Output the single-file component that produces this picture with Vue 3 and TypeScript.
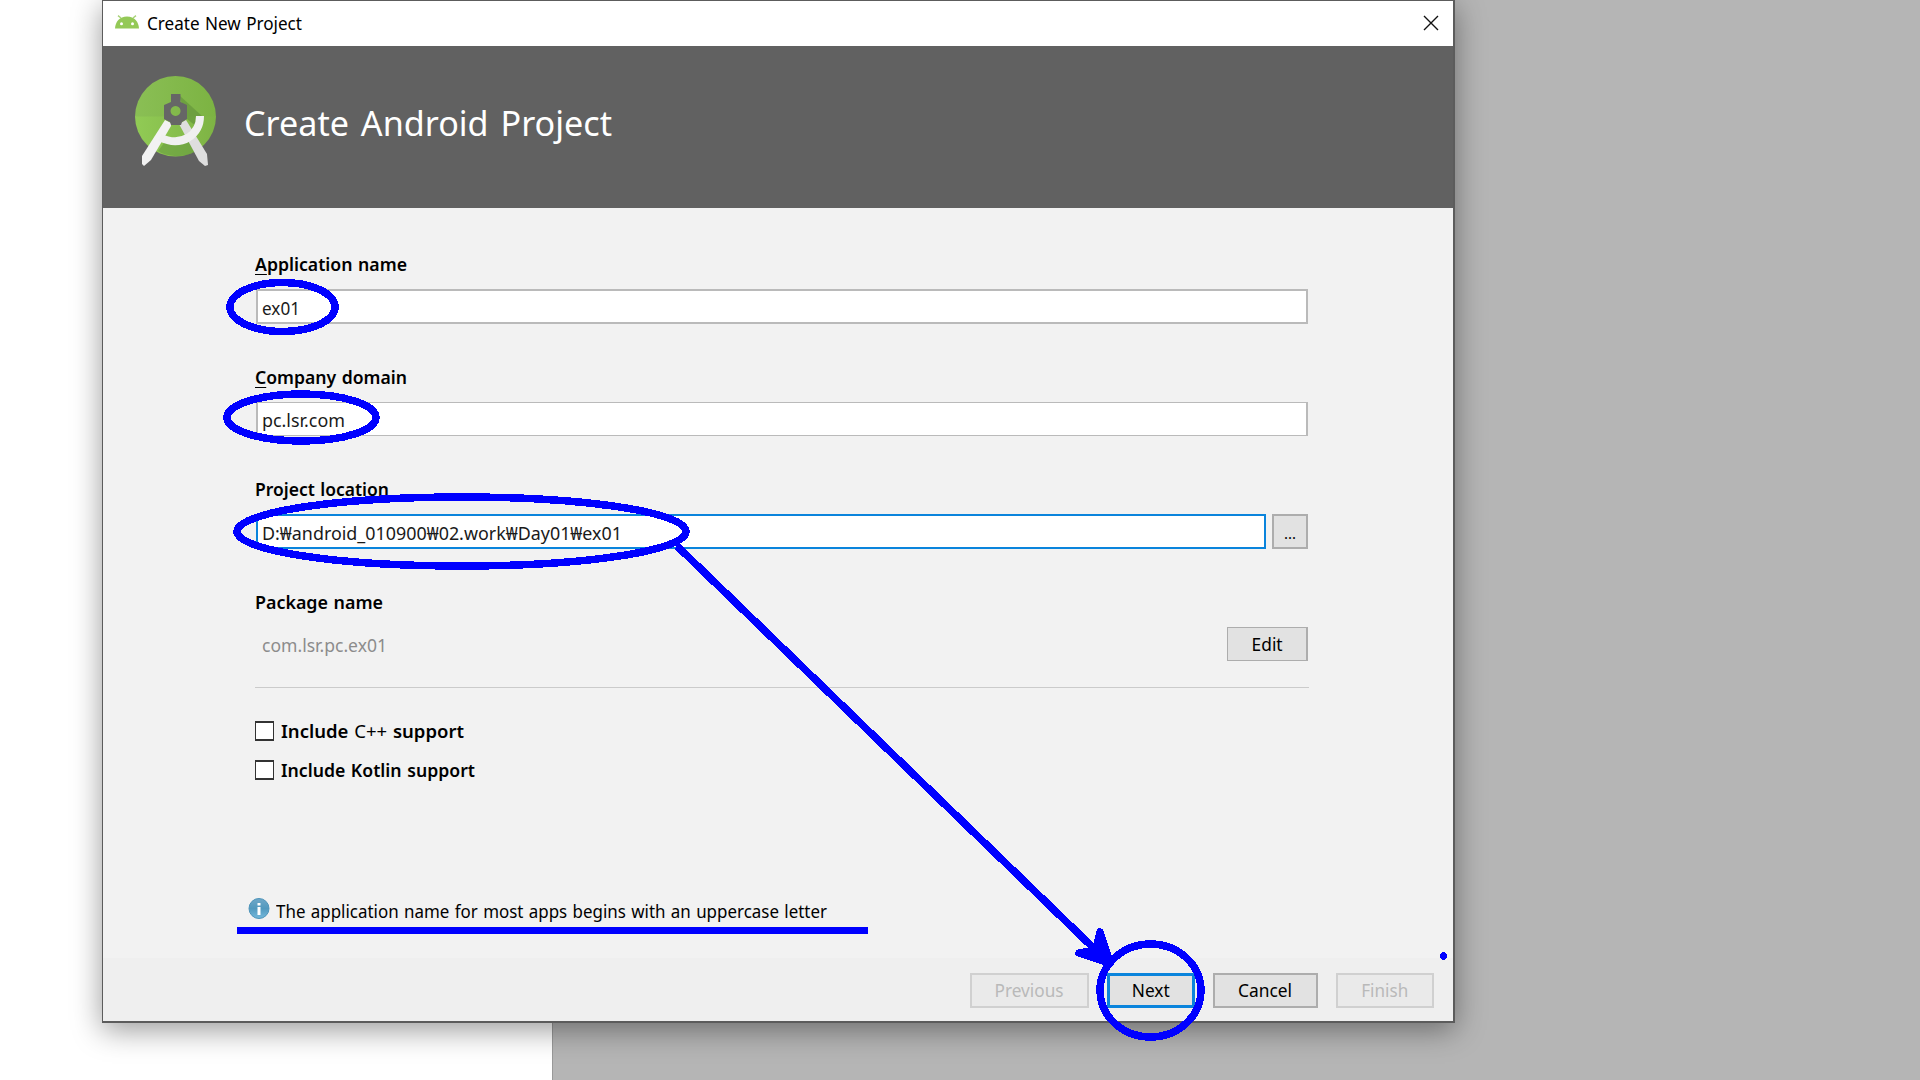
<script setup lang="ts">
interface Field {
  label: string
  mnemonic: string
  value: string
  labelWidth: number
  valueWidth: number
  kind: string
}

interface Action {
  text: string
  width: number
  textWidth: number
  gap: number
  state: string
}

const fields: Field[] = [
  { mnemonic: 'A', label: 'pplication name', value: 'ex01', labelWidth: 152, valueWidth: 38, kind: 'thick' },
  { mnemonic: 'C', label: 'ompany domain', value: 'pc.lsr.com', labelWidth: 152, valueWidth: 83, kind: 'thin' },
  { mnemonic: '', label: 'Project location', value: 'D:₩android_010900₩02.work₩Day01₩ex01', labelWidth: 134, valueWidth: 360, kind: 'focused' },
]

const options = [
  { lead: 'Include ', plain: 'C++', tail: ' support', width: 183 },
  { lead: 'Include Kotlin support', plain: '', tail: '', width: 194 },
]

const actions: Action[] = [
  { text: 'Previous', width: 119, textWidth: 69, gap: 18, state: 'disabled' },
  { text: 'Next', width: 88, textWidth: 38, gap: 18, state: 'primary' },
  { text: 'Cancel', width: 105, textWidth: 54, gap: 18, state: 'normal' },
  { text: 'Finish', width: 98, textWidth: 47, gap: 0, state: 'disabled' },
]

// Condenses a text run horizontally to a given width.
const vFit = {
  mounted(el: HTMLElement, binding: { value: number }) {
    const natural = el.getBoundingClientRect().width
    el.style.transform = `scaleX(${binding.value / natural})`
  },
}
</script>

<template>
  <div class="desktop">
    <div class="page"></div>
    <section class="window">
      <div class="titlebar">
        <svg class="droid" width="24" height="14" viewBox="0 0 24 14">
          <path d="M6 3L3 .6M18 3L21 .6" fill="none" stroke="#a9d279" stroke-width="1.4" />
          <path d="M0 13.500C.3 7 4.500 1.500 12 1.500s11.700 5.500 12 12z" fill="#94c957" />
          <circle cx="6.500" cy="8.700" r="1.500" fill="#fff" /><circle cx="17.500" cy="8.700" r="1.500" fill="#fff" />
        </svg>
        <span v-fit="155" class="fit">Create New Project</span>
        <svg class="close" width="16" height="16" viewBox="0 0 16 16"><path d="M1 1l14 14M15 1L1 15" stroke="#111" stroke-width="1.400" /></svg>
      </div>
      <header>
        <svg class="logo" width="82" height="92" viewBox="15 11 82 92">
          <defs>
            <linearGradient id="top" x1="0" x2="1"><stop offset="0" stop-color="#8abf55" /><stop offset="1" stop-color="#7cb342" /></linearGradient>
            <linearGradient id="low" x1="0" x2="1"><stop offset="0" stop-color="#91cb55" /><stop offset="1" stop-color="#7eb344" /></linearGradient>
          </defs>
          <path d="M15 52a40.500 41 0 0 1 81 0z" fill="url(#top)" />
          <path d="M15 51.500a40.500 40 0 0 0 81 0z" fill="url(#low)" />
          <path d="M59 30L82 51L81 65L67 54z" fill="#5d8d38" opacity=".55" />
          <path d="M47 74Q62 82 74 73L80 84Q68 92 55 91Q43 90 38 86z" fill="#5f943b" opacity=".5" />
          <path d="M59 59L66 55L87 89L88 100L85 101L79 96z" fill="#dedede" />
          <path d="M45 55L51 58V61L31 95L24 101L22 99V91z" fill="#f2f2f2" />
          <path d="M40 72.500Q56 80 68.500 72.500Q80 65 80 51" fill="none" stroke="#f0f0f0" stroke-width="8" />
          <path fill-rule="evenodd" d="M51 29h9.500v8l6.500 3v14l-5 3-1 3h-10l-1-3-6-3V40l7-3zM55.500 41a5 5 0 1 0 .1 0z" fill="#666" />
        </svg>
        <h1 v-fit="368" class="fit">Create Android Project</h1>
      </header>
      <main>
        <div v-for="field in fields" :key="field.value" class="group">
          <label v-fit="field.labelWidth" class="fit"><span class="mnemonic">{{ field.mnemonic }}</span>{{ field.label }}</label>
          <div class="row">
            <div class="input" :class="field.kind"><span v-fit="field.valueWidth" class="fit">{{ field.value }}</span></div>
            <div v-if="field.kind === 'focused'" class="button browse"><span>...</span></div>
          </div>
        </div>
        <div class="group package">
          <label v-fit="128" class="fit">Package name</label>
          <div class="row">
            <div class="readonly"><span v-fit="125" class="fit">com.lsr.pc.ex01</span></div>
            <div class="button edit"><span v-fit="31">Edit</span></div>
          </div>
        </div>
        <div class="options">
          <div v-for="option in options" :key="option.width" class="option">
            <i class="box"></i><span v-fit="option.width" class="fit">{{ option.lead }}<span class="plain">{{ option.plain }}</span>{{ option.tail }}</span>
          </div>
        </div>
        <div class="message">
          <svg width="22" height="22" viewBox="0 0 22 22">
            <defs><linearGradient id="info" x1="0" x2="0" y1="0" y2="1"><stop offset="0" stop-color="#70a8c8" /><stop offset=".5" stop-color="#5299be" /><stop offset="1" stop-color="#75b9dc" /></linearGradient></defs>
            <circle cx="11" cy="10.500" r="10" fill="url(#info)" stroke="#4d94ba" stroke-width="1" />
            <path d="M9.500 5h3v2.500h-3zM9.500 9h3v8h-3z" fill="#fff" />
          </svg>
          <span v-fit="551" class="fit">The application name for most apps begins with an uppercase letter</span>
        </div>
      </main>
      <footer>
        <div
          v-for="action in actions"
          :key="action.text"
          class="button"
          :class="action.state"
          :style="{ width: action.width + 'px', marginRight: action.gap + 'px' }"
        ><span v-fit="action.textWidth">{{ action.text }}</span></div>
      </footer>
    </section>
    <svg class="ink" width="1920" height="1080" viewBox="0 0 1920 1080" fill="none" stroke="#00f" stroke-width="7.500" shape-rendering="crispEdges">
      <ellipse cx="282.500" cy="307" rx="52.500" ry="24.500" />
      <ellipse cx="301.500" cy="417.500" rx="74.500" ry="23.500" />
      <ellipse cx="461.500" cy="531.500" rx="224.500" ry="34.500" />
      <ellipse cx="1150.500" cy="990.500" rx="50.500" ry="46.500" />
      <path d="M677 546L1108 962" />
      <path d="M1100 932L1110 963L1079 953L1096 950z" fill="#00f" stroke-linejoin="round" />
      <path d="M237 930.500H868" />
      <ellipse cx="1443.500" cy="956" rx="3.500" ry="4" fill="#00f" stroke="none" />
    </svg>
  </div>
</template>

<style>
body {
  margin: 0;
  overflow: hidden;
}
</style>

<style scoped>
.desktop {
  position: relative;
  width: 1920px;
  height: 1080px;
  overflow: hidden;
  background: #b5b5b5;
  color: #000;
  font: 18px/24px "Noto Sans", "Noto Sans CJK KR", sans-serif;
  word-spacing: 1px;
}
.page {
  width: 552px;
  height: 1080px;
  background: #fff;
  border-right: 1px solid #999;
}
.window {
  position: absolute;
  left: 102px;
  top: 0;
  box-sizing: border-box;
  width: 1353px;
  height: 1023px;
  display: flex;
  flex-direction: column;
  background: #f2f2f2;
  border: solid #5c5c5c;
  border-width: 1px 2px 2px 1px;
  box-shadow: 0 7px 28px rgba(0, 0, 0, 0.4);
}
.fit {
  display: inline-block;
  white-space: pre;
  transform-origin: left center;
}
.titlebar {
  flex: none;
  display: flex;
  box-sizing: border-box;
  align-items: center;
  height: 45px;
  padding: 0 14px 2px 12px;
  background: #fff;
}
.droid {
  margin: 0 8px 2px 0;
}
.close {
  margin-left: auto;
}
header {
  flex: none;
  display: flex;
  align-items: flex-start;
  height: 162px;
  background: #616161;
}
.logo {
  margin: 30px 0 0 32px;
}
h1 {
  margin: 57px 0 0 27px;
  color: #fff;
  font-size: 34px;
  font-weight: 400;
  line-height: 40px;
  word-spacing: 3px;
}
main {
  flex: none;
  box-sizing: border-box;
  height: 750px;
  padding: 44px 144px 0 152px;
}
.group {
  height: 113px;
}
.group:nth-child(2) {
  height: 112px;
}
label {
  font-weight: 600;
}
.group > label {
  display: block;
  width: max-content;
}
.mnemonic {
  text-decoration: underline;
  text-decoration-thickness: 1px;
  text-underline-offset: 3px;
}
.row {
  display: flex;
  justify-content: space-between;
  height: 35px;
  margin: 13px 1px 0;
}
.input {
  box-sizing: border-box;
  display: flex;
  flex: 1;
  align-items: center;
  padding: 2px 0 0 4px;
  color: #1a1a1a;
  background: #fff;
  border: 2px solid #bababa;
}
.thin {
  height: 34px;
  border-width: 1px 2px;
}
.focused {
  border-color: #0a84dc;
}
.button {
  box-sizing: border-box;
  display: flex;
  align-items: center;
  justify-content: center;
  height: 35px;
  background: #e2e2e2;
  border: 2px solid #adadad;
}
.browse {
  width: 36px;
  margin-left: 6px;
  padding-top: 3px;
  font-size: 15px;
}
.package {
  box-sizing: border-box;
  height: 98px;
  border-bottom: 1px solid #cbcbcb;
}
.readonly {
  padding: 6px 0 0 6px;
  color: #8c8c8c;
}
.edit {
  width: 81px;
  height: 34px;
  border-width: 1px 2px 1px 1px;
}
.options {
  padding-top: 31px;
}
.option {
  display: flex;
  align-items: center;
  height: 24px;
  margin-bottom: 15px;
  font-weight: 600;
}
.plain {
  font-weight: 400;
}
.box {
  box-sizing: border-box;
  width: 19px;
  height: 20px;
  margin-right: 7px;
  background: #fff;
  border: solid #333;
  border-width: 2px 1px 2px 1px;
}
.message {
  display: flex;
  align-items: center;
  margin: 115px 0 0 -7px;
}
.message svg {
  margin: -3px 6px 0 0;
}
.message .fit {
  margin-top: 2px;
}
footer {
  display: flex;
  flex: 1;
  justify-content: flex-end;
  padding: 15px 19px 0 0;
  background: #efefef;
}
footer .button {
  padding-bottom: 1px;
}
.primary {
  border: 3px solid #0a84dc;
}
.disabled {
  color: #b9b9b9;
  background: #eaeaea;
  border-color: #d0d0d0;
}
.ink {
  position: absolute;
  left: 0;
  top: 0;
}
</style>
